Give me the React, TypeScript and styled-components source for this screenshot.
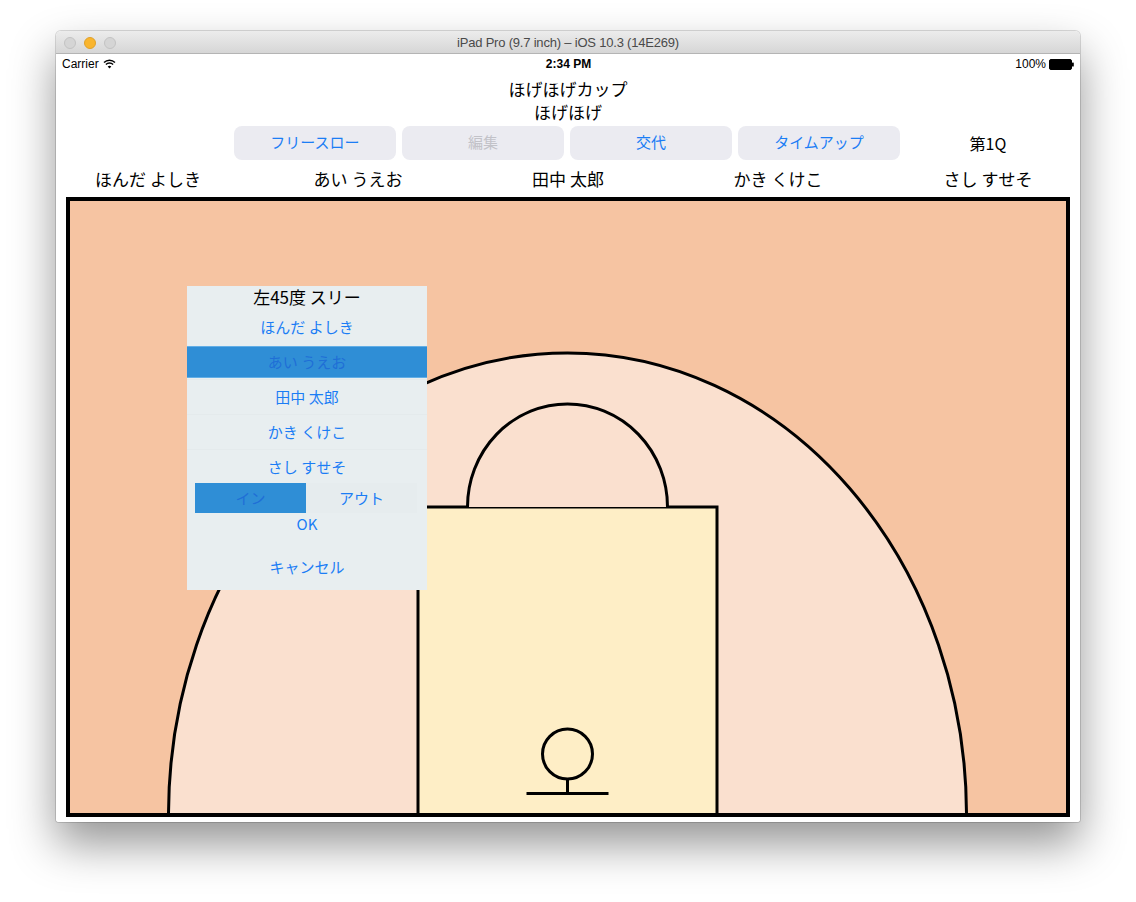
import React from "react";
import styled, { createGlobalStyle } from "styled-components";

const GlobalStyle = createGlobalStyle`
  html, body { margin: 0; padding: 0; background: #ffffff; }
  body { font-family: "Noto Sans CJK JP", sans-serif; }
  * { box-sizing: border-box; }
`;

const Stage = styled.div`
  width: 1136px;
  height: 902px;
  padding: 31px 0 0 56px;
  overflow: hidden;
`;

const Window = styled.div`
  width: 1024px;
  border-radius: 5px 5px 3px 3px;
  background: #ffffff;
  box-shadow: 0 0 0 1px rgba(0, 0, 0, 0.14), 0 22px 45px rgba(0, 0, 0, 0.42);
`;

const TitleBar = styled.div`
  height: 23px;
  display: grid;
  grid-template-columns: 1fr auto 1fr;
  align-items: center;
  padding: 1px 8px 0;
  border-radius: 5px 5px 0 0;
  background: linear-gradient(#ececec, #d6d6d6);
  border-bottom: 1px solid #b4b4b4;
`;

const Lights = styled.div`
  display: flex;
  gap: 8px;
`;

const Light = styled.span<{ $color: string; $edge: string }>`
  width: 12px;
  height: 12px;
  border-radius: 50%;
  background: ${(p) => p.$color};
  border: 1px solid ${(p) => p.$edge};
`;

const WindowTitle = styled.div`
  font-family: "Liberation Sans", Arial, sans-serif;
  font-size: 13px;
  letter-spacing: -0.2px;
  color: #4a4a4a;
`;

const Screen = styled.div`
  height: 768px;
  background: #ffffff;
  display: flex;
  flex-direction: column;
  overflow: hidden;
  border-radius: 0 0 3px 3px;
`;

const StatusBar = styled.div`
  height: 20px;
  display: grid;
  grid-template-columns: 1fr auto 1fr;
  align-items: center;
  padding: 0 5px 0 6px;
  font-family: "Liberation Sans", Arial, sans-serif;
  font-size: 12px;
  color: #000;
`;

const StatusLeft = styled.div`
  display: flex;
  align-items: center;
  gap: 4px;
`;

const StatusTime = styled.div`
  font-weight: bold;
`;

const StatusRight = styled.div`
  display: flex;
  justify-content: flex-end;
  align-items: center;
  gap: 3px;
`;

const Heading = styled.div`
  margin-top: 3px;
  text-align: center;
  font-size: 17px;
  line-height: 23px;
  color: #000;
`;

const ButtonRow = styled.div`
  margin-top: 3px;
  display: grid;
  grid-template-columns: 172px repeat(4, 162px) 1fr;
  column-gap: 6px;
  align-items: center;
`;

const ActionButton = styled.button<{ $disabled?: boolean }>`
  height: 34px;
  border: none;
  border-radius: 8px;
  background: #ebebf1;
  font-family: "Noto Sans CJK JP", sans-serif;
  font-size: 15px;
  line-height: 20px;
  color: ${(p) => (p.$disabled ? "#c2c2c8" : "#1b7df5")};
  padding: 0 0 2px;
`;

const Quarter = styled.div`
  text-align: center;
  padding-right: 10px;
  font-size: 16px;
  color: #000;
`;

const NameRow = styled.div`
  margin-top: 8px;
  display: grid;
  grid-template-columns: repeat(5, 210px);
  justify-content: center;
  font-size: 17px;
  line-height: 22px;
  color: #000;
`;

const Name = styled.div`
  text-align: center;
  white-space: nowrap;
`;

const Court = styled.div`
  position: relative;
  margin: 7px 10px 0;
  height: 620px;
  border: 4px solid #000;
  background: #f6c4a2;
`;

const CourtLines = styled.svg`
  display: block;
`;

const Picker = styled.div`
  position: absolute;
  left: 117px;
  top: 85px;
  width: 240px;
  height: 304px;
  background: #e8eef0;
  display: flex;
  flex-direction: column;
`;

const PickerTitle = styled.div`
  height: 22.5px;
  line-height: 21px;
  text-align: center;
  font-size: 17px;
  color: #000;
`;

const PickerRow = styled.div<{ $selected?: boolean; $first?: boolean }>`
  display: flex;
  align-items: center;
  justify-content: center;
  font-size: 15px;
  color: ${(p) => (p.$selected ? "#1f6fd6" : "#1b7df5")};
  background: ${(p) => (p.$selected ? "#2f8ed6" : "transparent")};
  border-top: 1px solid
    ${(p) => (p.$selected ? "#62aee6" : p.$first ? "transparent" : "#e4eaec")};
  border-bottom: 1px solid ${(p) => (p.$selected ? "#62aee6" : "transparent")};
  margin: ${(p) => (p.$selected ? "2px 0 1px" : "0")};
  height: ${(p) => (p.$selected ? "32px" : "35px")};
`;

const Segment = styled.div`
  margin: -1px 10px 0 8px;
  height: 30px;
  display: grid;
  grid-template-columns: 1fr 1fr;
`;

const SegmentItem = styled.div<{ $active?: boolean }>`
  display: flex;
  align-items: center;
  justify-content: center;
  font-size: 15px;
  color: ${(p) => (p.$active ? "#1f6fd6" : "#1b7df5")};
  background: ${(p) => (p.$active ? "#2f8ed6" : "#e6ecee")};
`;

const PickerAction = styled.div<{ $gap?: number }>`
  margin-top: ${(p) => p.$gap ?? 0}px;
  height: 22px;
  line-height: 22px;
  text-align: center;
  font-size: 15px;
  color: #1b7df5;
`;

const WifiIcon = () => (
  <svg width="13" height="10" viewBox="0 0 13 10">
    <path d="M1 3.6 A7.6 7.6 0 0 1 12 3.6" fill="none" stroke="#000" strokeWidth="1.4" />
    <path d="M2.9 5.6 A5 5 0 0 1 10.1 5.6" fill="none" stroke="#000" strokeWidth="1.4" />
    <path d="M6.5 9.6 L4.7 7.6 A2.5 2.5 0 0 1 8.3 7.6 Z" fill="#000" />
  </svg>
);

const BatteryIcon = () => (
  <svg width="26" height="11" viewBox="0 0 26 11">
    <rect x="0.5" y="0.5" width="22" height="10" rx="1.5" fill="#000" stroke="#000" />
    <rect x="23" y="3.5" width="1.8" height="4" rx="0.6" fill="#000" />
  </svg>
);

const players = ["ほんだ よしき", "あい うえお", "田中 太郎", "かき くけこ", "さし すせそ"];

export default function App() {
  return (
    <>
      <GlobalStyle />
      <Stage>
        <Window>
          <TitleBar>
            <Lights>
              <Light $color="#d5d5d5" $edge="#c3c3c3" />
              <Light $color="#f9b52e" $edge="#e0a12a" />
              <Light $color="#d5d5d5" $edge="#c3c3c3" />
            </Lights>
            <WindowTitle>iPad Pro (9.7 inch) – iOS 10.3 (14E269)</WindowTitle>
            <div />
          </TitleBar>
          <Screen>
            <StatusBar>
              <StatusLeft>
                <span>Carrier</span>
                <WifiIcon />
              </StatusLeft>
              <StatusTime>2:34 PM</StatusTime>
              <StatusRight>
                <span>100%</span>
                <BatteryIcon />
              </StatusRight>
            </StatusBar>
            <Heading>
              <div>ほげほげカップ</div>
              <div>ほげほげ</div>
            </Heading>
            <ButtonRow>
              <div />
              <ActionButton>フリースロー</ActionButton>
              <ActionButton $disabled>編集</ActionButton>
              <ActionButton>交代</ActionButton>
              <ActionButton>タイムアップ</ActionButton>
              <Quarter>第1Q</Quarter>
            </ButtonRow>
            <NameRow>
              {players.map((p) => (
                <Name key={p}>{p}</Name>
              ))}
            </NameRow>
            <Court>
              <CourtLines width="996" height="612" viewBox="0 0 996 612">
                <path
                  d="M98.5 614 A399 462 0 0 1 896.5 614 Z"
                  fill="#fae0cf"
                  stroke="#000"
                  strokeWidth="3"
                />
                <rect x="348" y="306" width="299" height="320" fill="#feeec6" stroke="#000" strokeWidth="3" />
                <path
                  d="M397.5 306 A100 103 0 0 1 597.5 306"
                  fill="#fae0cf"
                  stroke="#000"
                  strokeWidth="3"
                />
                <circle cx="497.5" cy="553" r="25" fill="none" stroke="#000" strokeWidth="3" />
                <line x1="497.5" y1="578" x2="497.5" y2="592" stroke="#000" strokeWidth="3" />
                <line x1="456.5" y1="592.5" x2="538.5" y2="592.5" stroke="#000" strokeWidth="3" />
              </CourtLines>
              <Picker>
                <PickerTitle>左45度 スリー</PickerTitle>
                <PickerRow $first>{players[0]}</PickerRow>
                <PickerRow $selected>{players[1]}</PickerRow>
                <PickerRow>{players[2]}</PickerRow>
                <PickerRow>{players[3]}</PickerRow>
                <PickerRow>{players[4]}</PickerRow>
                <Segment>
                  <SegmentItem $active>イン</SegmentItem>
                  <SegmentItem>アウト</SegmentItem>
                </Segment>
                <PickerAction>OK</PickerAction>
                <PickerAction $gap={21}>キャンセル</PickerAction>
              </Picker>
            </Court>
          </Screen>
        </Window>
      </Stage>
    </>
  );
}
